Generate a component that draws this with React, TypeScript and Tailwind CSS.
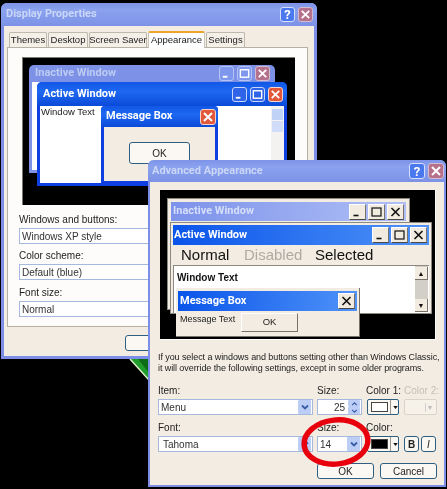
import type { ReactNode } from "react";

const ui = "font-['Liberation_Sans',sans-serif] whitespace-nowrap";
const cap = "font-['Roboto',sans-serif] font-bold whitespace-nowrap";

function Glyph({ kind, color = "#fff", w = 2 }: { kind: string; color?: string; w?: number }) {
  return (
    <svg viewBox="0 0 14 14" className="h-full w-full">
      {kind === "min" && <path d="M3 10.5h5" stroke={color} strokeWidth={w} fill="none" />}
      {kind === "max" && <rect x="2.5" y="3" width="9" height="8" stroke={color} strokeWidth={w * 0.75} fill="none" />}
      {kind === "close" && <path d="M3 3l8 8M11 3l-8 8" stroke={color} strokeWidth={w} fill="none" />}
    </svg>
  );
}

// rounded xp caption button
function XpBtn({ kind, tone, size = 15 }: { kind: string; tone: string; size?: number }) {
  const tones: Record<string, string> = {
    blue: "bg-[#2f63e8] border-[#c9d6fa]",
    red: "bg-[#e2583a] border-[#f4d5cc]",
    paleBlue: "bg-[#7f98ee] border-[#b5c4f5]",
    paleRed: "bg-[#b5708c] border-[#d3bcd0]",
    help: "bg-[#4a78ee] border-[#d5dffa]",
  };
  return (
    <div
      className={`flex shrink-0 items-center justify-center rounded-[3px] border ${tones[tone]} ${size === 15 ? "h-[15px] w-[15px]" : "h-[16px] w-[16px]"}`}
    >
      {kind === "help" ? (
        <span className={`${cap} text-[13px] leading-none text-white`}>?</span>
      ) : (
        <Glyph kind={kind} />
      )}
    </div>
  );
}

function ClassicBtn({ kind }: { kind: string }) {
  return (
    <div className="h-[16px] w-[17px] shrink-0 border-t border-l border-t-white border-l-white border-r border-b border-r-[#77736c] border-b-[#4a4844] bg-[#f1ebe0]">
      <Glyph kind={kind} color="#111" w={1.6} />
    </div>
  );
}

function Select({ text, w, arrow = true }: { text: string; w: string; arrow?: boolean }) {
  return (
    <div className={`flex h-[16px] items-center justify-between border border-[#a6b8dc] bg-white pl-[2px] ${w}`}>
      <span className={`${ui} text-[10px] text-[#333]`}>{text}</span>
      {arrow && (
        <span className="mr-px flex h-[14px] w-[13px] items-center justify-center rounded-[1px] bg-[#bccef5]">
          <svg viewBox="0 0 10 10" className="h-[10px] w-[10px]">
            <path d="M2 3.5l3 3 3-3" stroke="#3a5da8" strokeWidth="1.8" fill="none" />
          </svg>
        </span>
      )}
    </div>
  );
}

function Label({ children, className = "" }: { children: ReactNode; className?: string }) {
  return <div className={`${ui} text-[10px] leading-[12px] text-[#222] ${className}`}>{children}</div>;
}

function XpButton({ children, className = "" }: { children?: ReactNode; className?: string }) {
  return (
    <div
      className={`flex items-center justify-center rounded-[3px] border border-[#2f5f80] bg-[#fbf8f3] ${ui} text-[10px] text-[#222] ${className}`}
    >
      {children}
    </div>
  );
}

function Tab({ label, active, w }: { label: string; active?: boolean; w: string }) {
  return (
    <div
      className={`${ui} ${w} flex items-center justify-center rounded-t-[2px] border border-b-0 text-[9.5px] text-[#222] ${
        active
          ? "relative z-10 -mb-px h-[17px] border-[#c9c5ba] border-t-2 border-t-[#eda52c] bg-white"
          : "mt-[1px] h-[15px] border-[#bdb9ae] bg-[#f4f0e8]"
      }`}
    >
      {label}
    </div>
  );
}

function ColorBtn({ swatch }: { swatch: string }) {
  return (
    <div className="ml-px flex h-[16px] w-[32px] items-center rounded-[2px] border border-[#2f5f80] bg-[#fbf8f3] pl-[3px]">
      <div className={`h-[10px] w-[17px] border border-[#444] ${swatch}`} />
      <div className="ml-[2px] h-[14px] border-l border-[#9a968c]" />
      <svg viewBox="0 0 6 4" className="ml-[2px] h-[3px] w-[5px]">
        <path d="M0 0h6L3 4z" fill="#111" />
      </svg>
    </div>
  );
}

function DisplayProperties() {
  return (
    <div className="absolute top-[3px] left-[1px] flex h-[356px] w-[316px] flex-col rounded-t-[6px] border-x-[3px] border-b-[3px] border-[#7d8ee8] bg-[#f3ece2]">
      <div className="-mx-[3px] flex h-[23px] shrink-0 items-center justify-between rounded-t-[6px] bg-[linear-gradient(#7e93e8,#8aa2ef_30%,#7d92e6)] pr-[4px] pl-[5px]">
        <span className={`${cap} text-[11px] text-[#cad6f6]`}>Display Properties</span>
        <div className="flex gap-[3px]">
          <XpBtn kind="help" tone="help" />
          <XpBtn kind="close" tone="paleRed" />
        </div>
      </div>
      <div className="flex h-[21px] shrink-0 items-end gap-[1px] pl-[5px]">
        <Tab label="Themes" w="w-[38px]" />
        <Tab label="Desktop" w="w-[40px]" />
        <Tab label="Screen Saver" w="w-[58px]" />
        <Tab label="Appearance" w="w-[57px]" active />
        <Tab label="Settings" w="w-[39px]" />
      </div>
      <div className="ml-[3px] flex h-[280px] w-[301px] shrink-0 flex-col border border-[#b5b1a6] bg-[#fdfcfa] px-[11px] pt-[9px]">
        <div className="relative -mr-[1px] ml-[3px] h-[148px] w-[273px] shrink-0 border-t border-l border-[#7d7a72] bg-black">
          <div className="absolute top-[7px] left-[6px] h-[108px] w-[246px] rounded-t-[5px] bg-[#7d92e6]">
            <div className="flex h-[17px] items-center justify-between pr-[5px] pl-[6px]">
              <span className={`${cap} text-[11px] text-[#bccbf3]`}>Inactive Window</span>
              <div className="flex gap-[3px]">
                <XpBtn kind="min" tone="paleBlue" />
                <XpBtn kind="max" tone="paleBlue" />
                <XpBtn kind="close" tone="paleRed" />
              </div>
            </div>
            <div className="mx-[3px] h-[88px] bg-white" />
          </div>
          <div className="absolute top-[24px] left-[14px] flex h-[104px] w-[250px] flex-col rounded-t-[5px] border-x-[3px] border-b-[3px] border-[#0f3fe0] bg-white">
            <div className="-mx-[3px] flex h-[24px] shrink-0 items-center justify-between rounded-t-[5px] bg-[linear-gradient(#1257e6,#1e68f2_40%,#0a4ad8)] pr-[4px] pl-[6px]">
              <span className={`${cap} text-[11px] text-white`}>Active Window</span>
              <div className="flex gap-[3px]">
                <XpBtn kind="min" tone="blue" />
                <XpBtn kind="max" tone="blue" />
                <XpBtn kind="close" tone="red" />
              </div>
            </div>
            <div className="flex justify-between">
              <span className={`${ui} pl-px text-[9.5px] leading-[12px] text-[#222]`}>Window Text</span>
              <div className="flex h-[70px] w-[13px] flex-col items-center gap-[1px] bg-[#f4f2f0] pt-[3px]">
                <div className="h-[11px] w-[11px] rounded-[1px] bg-[#c1d2f7]" />
                <div className="h-[11px] w-[11px] rounded-[1px] bg-[#d0dcf8]" />
              </div>
            </div>
          </div>
          <div className="absolute top-[48px] left-[78px] flex h-[78px] w-[117px] flex-col rounded-t-[4px] border-x-[3px] border-b-[3px] border-[#0f3fe0] bg-[#f3ece2]">
            <div className="-mx-[3px] flex h-[21px] shrink-0 items-center justify-between rounded-t-[4px] bg-[linear-gradient(#1257e6,#1e68f2_40%,#0a4ad8)] pr-[2px] pl-[5px]">
              <span className={`${cap} text-[11px] text-white`}>Message Box</span>
              <XpBtn kind="close" tone="red" size={16} />
            </div>
            <XpButton className="mt-[15px] ml-[25px] h-[22px] w-[61px]">OK</XpButton>
          </div>
        </div>
        <Label className="mt-[9px]">Windows and buttons:</Label>
        <Select text="Windows XP style" w="mt-[2px] w-[240px]" arrow={false} />
        <Label className="mt-[6px]">Color scheme:</Label>
        <Select text="Default (blue)" w="mt-[2px] w-[240px]" arrow={false} />
        <Label className="mt-[7px]">Font size:</Label>
        <Select text="Normal" w="mt-[2px] w-[240px]" arrow={false} />
      </div>
      <XpButton className="mt-[8px] ml-[121px] h-[16px] w-[70px]" />
    </div>
  );
}

function AdvancedAppearance() {
  return (
    <div className="absolute top-[160px] left-[148px] flex h-[327px] w-[298px] flex-col rounded-t-[6px] border-x-[2px] border-b-[2px] border-[#7d8ee8] bg-[#f3ece2]">
      <div className="-mx-[2px] flex h-[22px] shrink-0 items-center justify-between rounded-t-[6px] bg-[linear-gradient(#7e93e8,#8aa2ef_30%,#7d92e6)] pr-[2px] pl-[4px]">
        <span className={`${cap} text-[11px] text-[#cad6f6]`}>Advanced Appearance</span>
        <div className="flex gap-[3px]">
          <XpBtn kind="help" tone="help" size={16} />
          <XpBtn kind="close" tone="paleRed" size={16} />
        </div>
      </div>
      <div className="relative mt-[8px] ml-[10px] h-[150px] w-[276px] shrink-0 border-r border-b border-[#fdfcfa] bg-black">
        <div className="absolute top-[8px] left-[7px] h-[112px] w-[243px] border border-[#8d8a82] bg-[#f3ece2] p-[3px]">
          <div className="flex h-[19px] items-center justify-between bg-[linear-gradient(90deg,#7d92ea,#b0c0f6)] pr-[2px] pl-[2px]">
            <span className={`${cap} text-[11px] text-[#d5dffa]`}>Inactive Window</span>
            <div className="flex gap-[2px]">
              <ClassicBtn kind="min" />
              <ClassicBtn kind="max" />
              <ClassicBtn kind="close" />
            </div>
          </div>
        </div>
        <div className="absolute top-[32px] left-[10px] flex h-[92px] w-[262px] flex-col border border-[#8d8a82] bg-[#f3ece2] px-[2px] pt-[2px]">
          <div className="flex h-[20px] shrink-0 items-center justify-between bg-[linear-gradient(90deg,#0a55ea,#4f93f8)] pr-[2px] pl-[1px]">
            <span className={`${cap} text-[11px] text-white`}>Active Window</span>
            <div className="flex gap-[2px]">
              <ClassicBtn kind="min" />
              <ClassicBtn kind="max" />
              <ClassicBtn kind="close" />
            </div>
          </div>
          <div className={`${ui} flex h-[20px] shrink-0 items-center pl-[8px] text-[15px]`}>
            <span className="w-[63px] text-[#111]">Normal</span>
            <span className="w-[71px] text-[#aeaba3]">Disabled</span>
            <span className="text-[#111]">Selected</span>
          </div>
          <div className="flex flex-1 justify-between border-t border-l border-t-[#8d8a82] border-l-[#8d8a82] bg-white pr-[1px] pb-[1px] pl-[3px]">
            <span className={`${ui} pt-[4px] text-[10px] font-bold text-[#111]`}>Window Text</span>
            <div className="flex w-[13px] flex-col justify-between bg-[#d2cfc9] pt-[1px]">
              <div className="flex h-[13px] items-center justify-center border-r border-b border-r-[#77736c] border-b-[#77736c] bg-[#f1ebe0] text-[7px] leading-none text-[#111]">▲</div>
              <div className="flex h-[13px] items-center justify-center border-r border-b border-r-[#77736c] border-b-[#77736c] bg-[#f1ebe0] text-[7px] leading-none text-[#111]">▼</div>
            </div>
          </div>
        </div>
        <div className="absolute top-[98px] left-[16px] flex h-[49px] w-[184px] flex-col border-r border-b border-r-[#77736c] border-b-[#77736c] bg-[#f3ece2] px-[2px] pt-[3px]">
          <div className="flex h-[20px] shrink-0 items-center justify-between bg-[linear-gradient(90deg,#0a55ea,#4f93f8)] pr-[2px] pl-[2px]">
            <span className={`${cap} text-[11px] text-white`}>Message Box</span>
            <ClassicBtn kind="close" />
          </div>
          <div className="flex items-start">
            <span className={`${ui} mt-[2px] ml-[2px] w-[61px] text-[9px] leading-[12px] text-[#222]`}>Message Text</span>
            <div className={`${ui} mt-[2px] flex h-[19px] w-[57px] items-center justify-center border-t border-l border-t-white border-l-white border-r border-b border-r-[#77736c] border-b-[#77736c] text-[9.5px] text-[#222]`}>OK</div>
          </div>
        </div>
      </div>
      <div className={`${ui} mt-[12px] ml-[8px] text-[9px] leading-[11px] tracking-[-0.08px] text-[#222]`}>
        <div>If you select a windows and buttons setting other than Windows Classic,</div>
        <div>it will override the following settings, except in some older programs.</div>
      </div>
      <div className="mt-[11px] ml-[8px] flex gap-[4px]">
        <div className="flex w-[155px] flex-col gap-[2px]">
          <Label>Item:</Label>
          <Select text="Menu" w="w-full" />
        </div>
        <div className="flex w-[45px] flex-col gap-[2px]">
          <Label>Size:</Label>
          <div className="flex h-[16px] items-center justify-end border border-[#a6b8dc] bg-white pr-[1px]">
            <span className={`${ui} mr-[3px] text-[10px] text-[#333]`}>25</span>
            <div className="flex h-[14px] w-[12px] flex-col justify-between">
              <div className="flex h-[7px] items-center justify-center rounded-[1px] bg-[#bccef5]">
                <svg viewBox="0 0 8 5" className="h-[4px] w-[7px]">
                  <path d="M1 4l3-3 3 3" stroke="#3a5da8" strokeWidth="1.4" fill="none" />
                </svg>
              </div>
              <div className="flex h-[7px] items-center justify-center rounded-[1px] bg-[#bccef5]">
                <svg viewBox="0 0 8 5" className="h-[4px] w-[7px]">
                  <path d="M1 1l3 3 3-3" stroke="#3a5da8" strokeWidth="1.4" fill="none" />
                </svg>
              </div>
            </div>
          </div>
        </div>
        <div className="flex w-[34px] flex-col gap-[2px]">
          <Label>Color 1:</Label>
          <ColorBtn swatch="bg-white" />
        </div>
        <div className="flex w-[33px] flex-col gap-[2px]">
          <Label className="text-[#c4c0b7]">Color 2:</Label>
          <div className="flex h-[16px] items-center justify-end rounded-[2px] border border-[#d8d4ca] bg-[#f6f2ea] pr-[4px] text-[8px] text-[#bbb]">|▾</div>
        </div>
      </div>
      <div className="mt-[7px] ml-[8px] flex gap-[4px]">
        <div className="flex w-[155px] flex-col gap-[2px]">
          <Label>Font:</Label>
          <Select text="Tahoma" w="w-full pl-[4px]" />
        </div>
        <div className="flex w-[45px] flex-col gap-[2px]">
          <Label>Size:</Label>
          <Select text="14" w="w-full" />
        </div>
        <div className="flex w-[34px] flex-col gap-[2px]">
          <Label>Color:</Label>
          <ColorBtn swatch="bg-black" />
        </div>
        <div className="mt-[14px] flex gap-[2px]">
          <XpButton className="h-[16px] w-[15px] font-bold">B</XpButton>
          <XpButton className="h-[16px] w-[15px] italic">I</XpButton>
        </div>
      </div>
      <div className="mt-[11px] ml-[167px] flex gap-[6px]">
        <XpButton className="h-[16px] w-[57px]">OK</XpButton>
        <XpButton className="h-[16px] w-[57px]">Cancel</XpButton>
      </div>
    </div>
  );
}

export default function App() {
  return (
    <div className="relative h-[489px] w-[447px] overflow-hidden bg-black blur-[0.4px]">
      <DisplayProperties />
      <svg viewBox="0 0 20 22" className="absolute top-[359px] left-[129px] h-[22px] w-[20px]">
        <path d="M1 0h19v21z" fill="#1f9c2a" />
        <path d="M9 0h11v14z" fill="#0d6d16" />
        <path d="M1 0l19 21" stroke="#dff2c8" strokeWidth="1.5" fill="none" />
      </svg>
      <AdvancedAppearance />
      {/* red circle drawn over the size box */}
      <svg viewBox="0 0 72 54" className="absolute top-[415px] left-[300px] h-[54px] w-[72px]">
        <ellipse cx="36" cy="27" rx="32" ry="22" transform="rotate(-6 36 27)" fill="none" stroke="#e8000c" strokeWidth="5.5" />
      </svg>
    </div>
  );
}
